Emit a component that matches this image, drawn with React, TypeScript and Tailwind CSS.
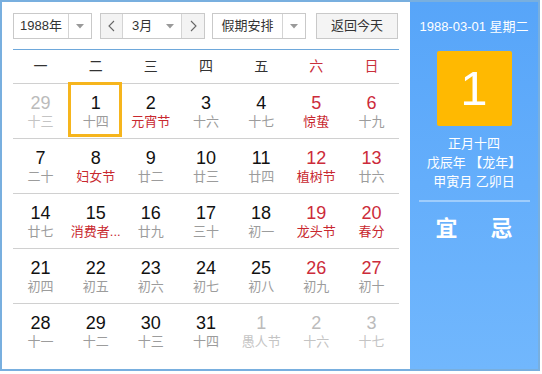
import React from "react";

type Day = { n: number; l: string; dim?: boolean; redN?: boolean; redL?: boolean; sel?: boolean };

const weeks: Day[][] = [
  [
    { n: 29, l: "十三", dim: true },
    { n: 1, l: "十四", sel: true },
    { n: 2, l: "元宵节", redL: true },
    { n: 3, l: "十六" },
    { n: 4, l: "十七" },
    { n: 5, l: "惊蛰", redN: true, redL: true },
    { n: 6, l: "十九", redN: true },
  ],
  [
    { n: 7, l: "二十" },
    { n: 8, l: "妇女节", redL: true },
    { n: 9, l: "廿二" },
    { n: 10, l: "廿三" },
    { n: 11, l: "廿四" },
    { n: 12, l: "植树节", redN: true, redL: true },
    { n: 13, l: "廿六", redN: true },
  ],
  [
    { n: 14, l: "廿七" },
    { n: 15, l: "消费者...", redL: true },
    { n: 16, l: "廿九" },
    { n: 17, l: "三十" },
    { n: 18, l: "初一" },
    { n: 19, l: "龙头节", redN: true, redL: true },
    { n: 20, l: "春分", redN: true, redL: true },
  ],
  [
    { n: 21, l: "初四" },
    { n: 22, l: "初五" },
    { n: 23, l: "初六" },
    { n: 24, l: "初七" },
    { n: 25, l: "初八" },
    { n: 26, l: "初九", redN: true },
    { n: 27, l: "初十", redN: true },
  ],
  [
    { n: 28, l: "十一" },
    { n: 29, l: "十二" },
    { n: 30, l: "十三" },
    { n: 31, l: "十四" },
    { n: 1, l: "愚人节", dim: true },
    { n: 2, l: "十六", dim: true },
    { n: 3, l: "十七", dim: true },
  ],
];

const weekdays = ["一", "二", "三", "四", "五", "六", "日"];

function Caret() {
  return (
    <svg width="8" height="5" viewBox="0 0 8 5">
      <path d="M0 0 L8 0 L4 4.5 Z" fill="#9a9a9a" />
    </svg>
  );
}

function Chevron({ dir }: { dir: "l" | "r" }) {
  return (
    <svg width="7" height="12" viewBox="0 0 7 12">
      <polyline
        points={dir === "l" ? "6,1 1,6 6,11" : "1,1 6,6 1,11"}
        fill="none"
        stroke="#666"
        strokeWidth="1.1"
      />
    </svg>
  );
}

export default function App() {
  return (
    <div
      className="w-[542px] h-[374px] bg-white"
      style={{ fontFamily: '"Liberation Sans", "Noto Sans CJK SC", sans-serif' }}
    >
      <div className="flex w-[540px] h-[371px] border-2 border-[#78afdf]">
        {/* Calendar */}
        <div className="w-[408px] px-[11px] pt-[11px]">
          {/* Controls */}
          <div className="flex h-[26px] text-[13px] text-[#333]">
            <div className="flex w-[79px] border border-[#c9c9c9]">
              <div className="w-[55px] flex items-center justify-center border-r border-[#d4d4d4]">1988年</div>
              <div className="flex-1 flex items-center justify-center">
                <Caret />
              </div>
            </div>
            <div className="flex w-[105px] ml-[8px] border border-[#c9c9c9]">
              <div className="w-[22px] flex items-center justify-center bg-[#f3f3f3] border-r border-[#d4d4d4]">
                <Chevron dir="l" />
              </div>
              <div className="flex-1 flex items-center pl-[9px] pr-[7px] justify-between border-r border-[#d4d4d4]">
                <span>3月</span>
                <Caret />
              </div>
              <div className="w-[22px] flex items-center justify-center bg-[#f3f3f3]">
                <Chevron dir="r" />
              </div>
            </div>
            <div className="flex w-[94px] ml-[7px] border border-[#c9c9c9]">
              <div className="w-[70px] flex items-center justify-center border-r border-[#d4d4d4]">假期安排</div>
              <div className="flex-1 flex items-center justify-center">
                <Caret />
              </div>
            </div>
            <div className="flex w-[82px] ml-[10px] items-center justify-center border border-[#c9c9c9] bg-[#f4f4f4]">
              返回今天
            </div>
          </div>

          {/* Week header */}
          <div className="mt-[10px] border-t border-[#6ea8db]" />
          <div className="grid grid-cols-7 h-[34px] border-b border-[#d0d0d0] text-[14px] items-center">
            {weekdays.map((w, i) => (
              <div key={w} className={`text-center ${i >= 5 ? "text-[#c9303b]" : "text-[#333]"}`}>
                {w}
              </div>
            ))}
          </div>

          {/* Days */}
          {weeks.map((week, ri) => (
            <div
              key={ri}
              className={`grid grid-cols-7 h-[55px] ${ri < 4 ? "border-b border-[#d0d0d0]" : ""}`}
            >
              {week.map((d, ci) => (
                <div key={ci} className="relative flex flex-col items-center pt-[9px]">
                  {d.sel && (
                    <span className="absolute -top-[2px] bottom-[1px] left-0 right-[1px] border-[3px] border-[#f6b51d]" />
                  )}
                  <span
                    className={`text-[18px] leading-[20px] ${
                      d.dim ? "text-[#bbbbbb]" : d.redN ? "text-[#cc2b3a]" : "text-[#111]"
                    }`}
                  >
                    {d.n}
                  </span>
                  <span
                    className={`text-[13px] leading-[18px] whitespace-nowrap ${
                      d.dim ? "text-[#c4c4c4]" : d.redL ? "text-[#c8282f]" : "text-[#9c9c9c]"
                    }`}
                  >
                    {d.l}
                  </span>
                </div>
              ))}
            </div>
          ))}
        </div>

        {/* Side panel */}
        <div className="flex-1 flex flex-col items-center bg-gradient-to-b from-[#57a5f9] to-[#71b7fd] text-white pt-[17px]">
          <div className="text-[13px] leading-[16px]">1988-03-01 星期二</div>
          <div className="mt-[16px] w-[75px] h-[75px] rounded-[2px] bg-[#ffb901] flex items-center justify-center text-[49px] leading-none">
            1
          </div>
          <div className="mt-[8px] text-[13px] leading-[19px] text-center">
            <div>正月十四</div>
            <div>戊辰年 【龙年】</div>
            <div>甲寅月 乙卯日</div>
          </div>
          <div className="mt-[9px] w-[111px] h-[2px] bg-[#9fcdfc]" />
          <div className="mt-[13px] flex gap-[33px] text-[22px] leading-[28px] font-bold">
            <span>宜</span>
            <span>忌</span>
          </div>
        </div>
      </div>
    </div>
  );
}
